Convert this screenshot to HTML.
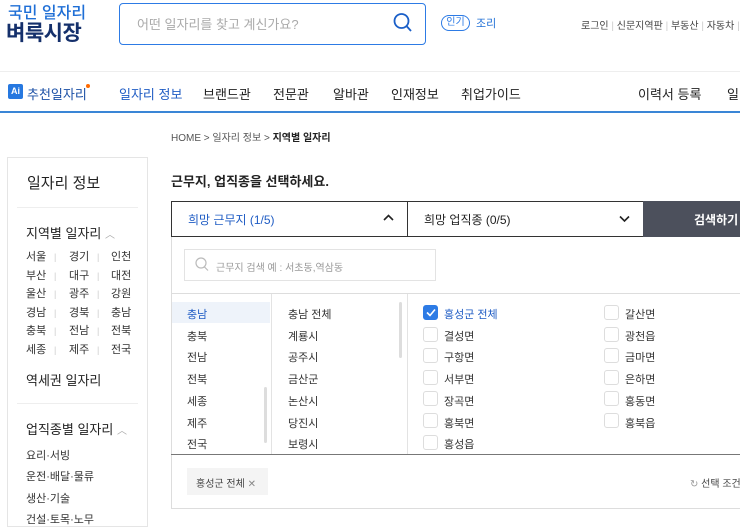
<!DOCTYPE html>
<html><head><meta charset="utf-8">
<style>
*{margin:0;padding:0;box-sizing:border-box}
body{width:740px;height:518px;overflow:hidden;background:#fff;font-family:"Liberation Sans","Noto Sans CJK KR",sans-serif;color:#222;position:relative}
.a{position:absolute;white-space:nowrap}
.cb{position:absolute;width:15px;height:15px;border:1px solid #ddd;border-radius:3px;background:#fff}
</style></head><body>
<div class="a" style="left:8px;top:4px;font-size:16px;font-weight:500;color:#1f6fd6;line-height:19px">국민 일자리</div>
<div class="a" style="left:6px;top:22px;font-size:21px;font-weight:bold;color:#15306b;line-height:24px;letter-spacing:-0.5px">벼룩시장</div>
<div class="a" style="left:119px;top:3px;width:307px;height:42px;border:1px solid #2d7be5;border-radius:4px"></div>
<div class="a" style="left:137px;top:14px;font-size:13px;color:#aaa">어떤 일자리를 찾고 계신가요?</div>
<svg class="a" style="left:393px;top:12px" width="20" height="22" viewBox="0 0 20 22"><circle cx="8.5" cy="9" r="7" fill="none" stroke="#1a5fc8" stroke-width="1.8"/><path d="M13.5 14l4.5 5" stroke="#1a5fc8" stroke-width="1.8"/></svg>
<div class="a" style="left:441px;top:15px;width:29px;height:16px;border:1px solid #2d7be5;border-radius:8px;font-size:10px;color:#2d7be5;text-align:center;line-height:14px">인기</div>
<div class="a" style="left:476px;top:15px;font-size:11px;color:#1f6fd6">조리</div>
<div class="a" style="left:581px;top:17px;font-size:10px;color:#444">로그인 <span style="color:#ccc">|</span> 신문지역판 <span style="color:#ccc">|</span> 부동산 <span style="color:#ccc">|</span> 자동차 <span style="color:#ccc">|</span></div>
<div class="a" style="left:0;top:71px;width:740px;height:1px;background:#eee"></div>
<div class="a" style="left:8px;top:84px;width:15px;height:15px;background:#2678e0;border-radius:2px;color:#fff;font-size:9px;font-weight:bold;text-align:center;line-height:15px">Ai</div>
<div class="a" style="left:27px;top:84px;font-size:13px;color:#1a4fa5">추천일자리</div>
<div class="a" style="left:86px;top:84px;width:4px;height:4px;border-radius:2px;background:#ff6a00"></div>
<div class="a" style="left:119px;top:84px;font-size:13px;color:#1f5cc4">일자리 정보</div>
<div class="a" style="left:203px;top:84px;font-size:13px;color:#222">브랜드관</div>
<div class="a" style="left:273px;top:84px;font-size:13px;color:#222">전문관</div>
<div class="a" style="left:333px;top:84px;font-size:13px;color:#222">알바관</div>
<div class="a" style="left:391px;top:84px;font-size:13px;color:#222">인재정보</div>
<div class="a" style="left:461px;top:84px;font-size:13px;color:#222">취업가이드</div>
<div class="a" style="left:638px;top:84px;font-size:13px;color:#222">이력서 등록</div>
<div class="a" style="left:727px;top:84px;font-size:13px;color:#222">일</div>
<div class="a" style="left:0;top:111px;width:740px;height:2px;background:#3a86d6"></div>
<div class="a" style="left:171px;top:129px;font-size:10px;color:#555">HOME &gt; 일자리 정보 &gt; <b style="color:#222">지역별 일자리</b></div>

<div class="a" style="left:7px;top:157px;width:141px;height:370px;border:1px solid #e5e5e5"></div>
<div class="a" style="left:27px;top:172px;font-size:15px">일자리 정보</div>
<div class="a" style="left:17px;top:207px;width:121px;height:1px;background:#eee"></div>
<div class="a" style="left:26px;top:223px;font-size:13px">지역별 일자리 <span style="color:#aaa;font-size:10px">︿</span></div>
<div class="a" style="left:26px;top:248px;font-size:11px;line-height:18.5px;color:#333">서울<br>부산<br>울산<br>경남<br>충북<br>세종</div>
<div class="a" style="left:69px;top:248px;font-size:11px;line-height:18.5px;color:#333">경기<br>대구<br>광주<br>경북<br>전남<br>제주</div>
<div class="a" style="left:111px;top:248px;font-size:11px;line-height:18.5px;color:#333">인천<br>대전<br>강원<br>충남<br>전북<br>전국</div>
<div class="a" style="left:54px;top:248px;font-size:9px;line-height:18.5px;color:#ccc">|<br>|<br>|<br>|<br>|<br>|</div>
<div class="a" style="left:97px;top:248px;font-size:9px;line-height:18.5px;color:#ccc">|<br>|<br>|<br>|<br>|<br>|</div>
<div class="a" style="left:26px;top:370px;font-size:13px">역세권 일자리</div>
<div class="a" style="left:17px;top:403px;width:121px;height:1px;background:#eee"></div>
<div class="a" style="left:26px;top:419px;font-size:13px">업직종별 일자리 <span style="color:#aaa;font-size:10px">︿</span></div>
<div class="a" style="left:26px;top:446px;font-size:11px;line-height:21.3px;color:#333">요리·서빙<br>운전·배달·물류<br>생산·기술<br>건설·토목·노무</div>

<div class="a" style="left:171px;top:171px;font-size:13px;font-weight:bold;color:#222">근무지, 업직종을 선택하세요.</div>
<div class="a" style="left:171px;top:201px;width:600px;height:308px;border:1px solid #ddd;border-right:none"></div>
<div class="a" style="left:171px;top:201px;width:237px;height:36px;border:1px solid #333;background:#fff"></div>
<div class="a" style="left:188px;top:211px;font-size:12px;color:#1f5cc4">희망 근무지 (1/5)</div>
<svg class="a" style="left:383px;top:214px" width="11" height="8"><path d="M1 6l4.5-4.5L10 6" fill="none" stroke="#222" stroke-width="1.6"/></svg>
<div class="a" style="left:407px;top:201px;width:237px;height:36px;border-top:1px solid #333;border-bottom:1px solid #333"></div>
<div class="a" style="left:424px;top:211px;font-size:12px;color:#222">희망 업직종 (0/5)</div>
<svg class="a" style="left:619px;top:215px" width="11" height="8"><path d="M1 1.5l4.5 4.5L10 1.5" fill="none" stroke="#222" stroke-width="1.6"/></svg>
<div class="a" style="left:643px;top:201px;width:97px;height:36px;background:#4c505c"></div>
<div class="a" style="left:694px;top:211px;font-size:12px;font-weight:bold;color:#fff">검색하기</div>
<div class="a" style="left:184px;top:249px;width:252px;height:32px;border:1px solid #e3e3e3"></div>
<svg class="a" style="left:195px;top:257px" width="14" height="15"><circle cx="6" cy="6" r="5" fill="none" stroke="#bbb" stroke-width="1.2"/><path d="M9.5 10l3.5 3.5" stroke="#bbb" stroke-width="1.2"/></svg>
<div class="a" style="left:216px;top:259px;font-size:10px;color:#999">근무지 검색 예 : 서초동,역삼동</div>
<div class="a" style="left:172px;top:293px;width:568px;height:1px;background:#ddd"></div>
<div class="a" style="left:172px;top:302px;width:98px;height:21px;background:#eef3fa"></div>
<div class="a" style="left:187px;top:305px;font-size:11px;line-height:21.7px;color:#333"><span style="color:#1f5cc4">충남</span><br>충북<br>전남<br>전북<br>세종<br>제주<br>전국</div>
<div class="a" style="left:264px;top:387px;width:3px;height:56px;background:#ddd;border-radius:2px"></div>
<div class="a" style="left:271px;top:294px;width:1px;height:160px;background:#e3e3e3"></div>
<div class="a" style="left:288px;top:305px;font-size:11px;line-height:21.7px;color:#333">충남 전체<br>계룡시<br>공주시<br>금산군<br>논산시<br>당진시<br>보령시</div>
<div class="a" style="left:399px;top:302px;width:3px;height:56px;background:#ddd;border-radius:2px"></div>
<div class="a" style="left:407px;top:294px;width:1px;height:160px;background:#e3e3e3"></div>
<div class="cb" style="left:423px;top:305px;background:#2d7be5;border-color:#2d7be5"></div>
<svg class="a" style="left:426px;top:308px" width="10" height="9"><path d="M1 4.5l3 3L9 1.5" fill="none" stroke="#fff" stroke-width="1.6"/></svg>
<div class="cb" style="left:423px;top:327px"></div><div class="cb" style="left:423px;top:348px"></div><div class="cb" style="left:423px;top:370px"></div><div class="cb" style="left:423px;top:391px"></div><div class="cb" style="left:423px;top:413px"></div><div class="cb" style="left:423px;top:435px"></div>
<div class="a" style="left:444px;top:305px;font-size:11px;line-height:21.7px;color:#333"><span style="color:#1f5cc4">홍성군 전체</span><br>결성면<br>구항면<br>서부면<br>장곡면<br>홍북면<br>홍성읍</div>
<div class="cb" style="left:604px;top:305px"></div><div class="cb" style="left:604px;top:327px"></div><div class="cb" style="left:604px;top:348px"></div><div class="cb" style="left:604px;top:370px"></div><div class="cb" style="left:604px;top:391px"></div><div class="cb" style="left:604px;top:413px"></div>
<div class="a" style="left:625px;top:305px;font-size:11px;line-height:21.7px;color:#333">갈산면<br>광천읍<br>금마면<br>은하면<br>홍동면<br>홍북읍</div>
<div class="a" style="left:171px;top:454px;width:569px;height:1px;background:#777"></div>
<div class="a" style="left:187px;top:468px;width:81px;height:27px;background:#f4f4f4"></div>
<div class="a" style="left:196px;top:475px;font-size:10px;color:#444">홍성군 전체 <span style="color:#888">✕</span></div>
<div class="a" style="left:690px;top:475px;font-size:10px;color:#444"><span style="color:#999">↻</span> 선택 조건</div>
</body></html>
